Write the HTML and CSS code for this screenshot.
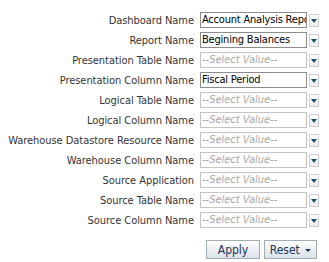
FILE: index.html
```html
<!DOCTYPE html>
<html>
<head>
    <title>Lineage Filter</title>
    <link rel="stylesheet" href="styles.css">
</head>
<body>
    <div class="filter-form">
        <div class="row">
            <label>Dashboard Name</label>
            <div class="field">Account Analysis Report</div>
            <span class="drop"></span>
        </div>
        <div class="row">
            <label>Report Name</label>
            <div class="field">Begining Balances</div>
            <span class="drop"></span>
        </div>
        <div class="row">
            <label>Presentation Table Name</label>
            <div class="field empty">--Select Value--</div>
            <span class="drop"></span>
        </div>
        <div class="row">
            <label>Presentation Column Name</label>
            <div class="field">Fiscal Period</div>
            <span class="drop"></span>
        </div>
        <div class="row">
            <label>Logical Table Name</label>
            <div class="field empty">--Select Value--</div>
            <span class="drop"></span>
        </div>
        <div class="row">
            <label>Logical Column Name</label>
            <div class="field empty">--Select Value--</div>
            <span class="drop"></span>
        </div>
        <div class="row">
            <label>Warehouse Datastore Resource Name</label>
            <div class="field empty">--Select Value--</div>
            <span class="drop"></span>
        </div>
        <div class="row">
            <label>Warehouse Column Name</label>
            <div class="field empty">--Select Value--</div>
            <span class="drop"></span>
        </div>
        <div class="row">
            <label>Source Application</label>
            <div class="field empty">--Select Value--</div>
            <span class="drop"></span>
        </div>
        <div class="row">
            <label>Source Table Name</label>
            <div class="field empty">--Select Value--</div>
            <span class="drop"></span>
        </div>
        <div class="row">
            <label>Source Column Name</label>
            <div class="field empty">--Select Value--</div>
            <span class="drop"></span>
        </div>
        <div class="actions">
            <button class="btn apply">Apply</button>
            <button class="btn reset">Reset <span class="caret"></span></button>
        </div>
    </div>
</body>
</html>
```

FILE: styles.css
```css
body {
    margin: 0;
    background: #fff;
    font-family: "DejaVu Sans Condensed", "DejaVu Sans", sans-serif;
    font-size: 11px;
    color: #333;
}
.filter-form {
    padding-top: 12px;
    width: 329px;
}
.row {
    display: flex;
    align-items: center;
    height: 16px;
    margin-bottom: 4px;
}
.row label {
    width: 194px;
    text-align: right;
    margin-right: 6px;
    white-space: nowrap;
    letter-spacing: -0.05px;
}
.field {
    box-sizing: border-box;
    width: 107px;
    height: 16px;
    border: 1px solid #8c8c8c;
    padding: 0 1px;
    font-family: "DejaVu Sans Condensed", "DejaVu Sans", sans-serif;
    font-size: 11px;
    letter-spacing: -0.2px;
    line-height: 14px;
    color: #000;
    white-space: nowrap;
    overflow: hidden;
}
.field.empty {
    border-color: #c4c4c4;
    color: #a9a9a9;
    font-style: italic;
    letter-spacing: 0;
}
.drop {
    box-sizing: border-box;
    width: 10px;
    height: 13px;
    margin-left: 2px;
    border: 1px solid #d0d0d0;
    background: linear-gradient(#ffffff, #e9eef2);
    position: relative;
}
.drop::after {
    content: "";
    position: absolute;
    left: 1px;
    top: 4px;
    border-left: 3px solid transparent;
    border-right: 3px solid transparent;
    border-top: 4px solid #1d4e6b;
}
.actions {
    display: flex;
    gap: 4px;
    padding-left: 206px;
    margin-top: 12px;
}
.btn {
    box-sizing: border-box;
    height: 19px;
    border: 1px solid #a4acb4;
    border-radius: 0;
    background: linear-gradient(#ffffff, #d9e1ea);
    color: #1c3553;
    font-family: "DejaVu Sans Condensed", "DejaVu Sans", sans-serif;
    font-size: 12px;
    padding: 0;
}
.apply {
    width: 54px;
}
.reset {
    width: 53px;
}
.caret {
    display: inline-block;
    margin-left: 2px;
    vertical-align: middle;
    border-left: 3px solid transparent;
    border-right: 3px solid transparent;
    border-top: 3px solid #1c3553;
}
```
